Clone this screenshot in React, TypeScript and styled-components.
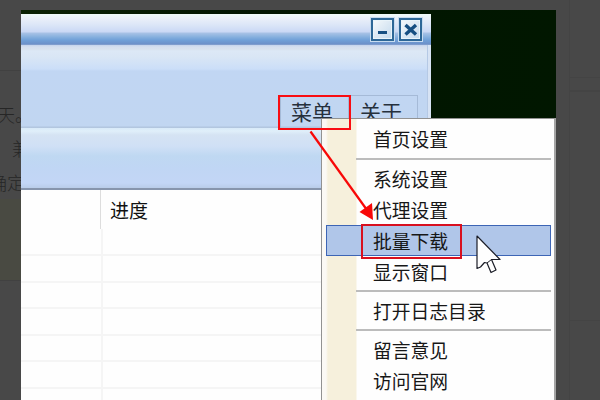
import React from 'react';
import styled, { createGlobalStyle } from 'styled-components';

const GlobalStyle = createGlobalStyle`
  * { box-sizing: border-box; }
  body { margin: 0; overflow: hidden; font-family: "Noto Sans CJK SC", sans-serif; }
`;

const Page = styled.div`
  position: relative;
  display: grid;
  grid-template-columns: 21px 535px 44px;
  width: 600px;
  height: 400px;
  overflow: hidden;
  background: #484848;
`;

const Backdrop = styled.div`
  display: flex;
  flex-direction: column;
  overflow: hidden;
`;

const Band = styled.div<{ $h: number; $tint?: string }>`
  flex: none;
  height: ${p => p.$h}px;
  background: ${p => p.$tint ?? 'transparent'};
  border-bottom: 1px solid #414141;
`;

const DimText = styled.div`
  flex: none;
  padding-top: 26px;
`;

const DimLine = styled.div<{ $shift: number }>`
  height: 34px;
  line-height: 34px;
  margin-left: ${p => p.$shift}px;
  white-space: nowrap;
  font-size: 18px;
  font-weight: 300;
  color: #262626;
`;

const DimCard = styled.div<{ $h: number; $top?: boolean }>`
  flex: none;
  height: ${p => p.$h}px;
  margin-left: 13px;
  border: solid #444444;
  border-width: ${p => (p.$top ? '1px 0 0 1px' : '0 0 1px 1px')};
`;

const Shot = styled.div`
  height: 390px;
  margin-top: 10px;
  padding-top: 4px;
  background: linear-gradient(90deg, #0b2203 0, #061b02 130px, #011500 230px, #011700 100%);
  overflow: hidden;
`;

const Window = styled.div`
  display: flex;
  flex-direction: column;
  width: 410px;
  height: 386px;
  background: #fefefe;
  overflow: hidden;
`;

const TitleBar = styled.div`
  display: flex;
  flex: none;
  justify-content: flex-end;
  gap: 5px;
  height: 31px;
  padding: 4px 9px 0 0;
  background: linear-gradient(#effaf8 0, #e9eff9 5px, #d9e4f7 12px, #cad8f5 18px, #a8c2e6 19px, #86b0de 23px, #70a0d8 26px, #6c90c9 30px, #91a8d2 31px);
`;

const TitleButton = styled.div`
  display: grid;
  place-items: center;
  width: 23px;
  height: 23px;
  border: 2px solid #2d6797;
  background: linear-gradient(135deg, #f5f9fb, #c3d9ed);
  box-shadow: inset 0 0 0 1px #e9f4fa, 0 0 0 1px #c8dcf0;
`;

const Toolbar = styled.div`
  display: flex;
  flex: none;
  align-items: flex-end;
  justify-content: flex-end;
  height: 83px;
  padding-right: 13px;
  background: linear-gradient(#c4d3ec 0, #d5dfef 2px, #d8e1ee 4px, #dce8f6 6px, #d9e6f5 12px, #cbdef8 24px, #c1d6f3 26px, #c1d6f1 81px, #b1c5df 82px, #b4c8e0 83px);
  box-shadow: inset -4px 0 0 -1px #d7e3f4, inset -5px 0 0 -1px #b5c9e5;
`;

const TabButton = styled.div`
  width: 69px;
  height: 33px;
  padding-left: 10px;
  border: 1px solid #a5bad7;
  border-bottom: 0;
  font-size: 21px;
  line-height: 30px;
  color: #26303c;
  white-space: nowrap;
`;

const SubBar = styled.div`
  flex: none;
  height: 62px;
  border-bottom: 2px solid #8795ad;
  background: linear-gradient(#d8eaf9 0, #e0effa 3px, #d5e3f3 7px, #d0e0f6 18px, #bfd8f2 28px, #c0d6f4 40px, #c3d6f6 55px, #b9cce9 60px);
`;

const TableHead = styled.div`
  display: grid;
  grid-template-columns: 79px 1fr;
  flex: none;
  height: 39px;
`;

const HeadCell = styled.div`
  padding-left: 9px;
  font-size: 19px;
  line-height: 39px;
  color: #111;
  & + & { border-left: 1px solid #dddddd; }
`;

const TableRow = styled.div<{ $h: number }>`
  display: grid;
  grid-template-columns: 80px 1fr;
  flex: none;
  height: ${p => p.$h}px;
  border-bottom: 2px solid #f5f5f5;
`;

const Cell = styled.div`
  & + & { border-left: 2px solid #f5f5f5; }
`;

const Menu = styled.div`
  position: absolute;
  left: 321px;
  top: 118px;
  width: 235px;
  height: 284px;
  padding: 4px 3px 0 4px;
  border: 1px solid #929292;
  border-right: 2px solid #a4a4a4;
  background: linear-gradient(90deg, #fbf9f5 0, #fbf9f5 4px, #f6f0dc 6px, #f6f0dc 34px, #fefefe 35px);
`;

const MenuItem = styled.div<{ $active?: boolean }>`
  height: 31px;
  padding-left: 46px;
  border: 1px solid ${p => (p.$active ? '#3d65b5' : 'transparent')};
  background: ${p => (p.$active ? '#b0c6e9' : 'transparent')};
  font-size: 18.8px;
  line-height: 29px;
  color: #171717;
  white-space: nowrap;
`;

const Separator = styled.div<{ $before?: number }>`
  height: 2px;
  margin: ${p => p.$before ?? 3}px 0 3px 30px;
  background: #bcbcbc;
`;

const RedBox = styled.div<{ $x: number; $y: number; $w: number; $h: number; $color: string }>`
  position: absolute;
  left: ${p => p.$x}px;
  top: ${p => p.$y}px;
  width: ${p => p.$w}px;
  height: ${p => p.$h}px;
  border: 2px solid ${p => p.$color};
`;

const Arrow = styled.svg`
  position: absolute;
  left: 300px;
  top: 125px;
`;

const Pointer = styled.svg`
  position: absolute;
  left: 474px;
  top: 233px;
`;

const rowHeights = [27, 27, 26, 27, 26, 27, 26];

export default function App() {
  return (
    <>
      <GlobalStyle />
      <Page>
        <Backdrop>
          <Band $h={71} />
          <DimText>
            <DimLine $shift={-3}>天。</DimLine>
            <DimLine $shift={12}>兼</DimLine>
            <DimLine $shift={-11}>确定</DimLine>
          </DimText>
          <Band $h={82} $tint="#494a42" />
        </Backdrop>
        <Shot>
          <Window>
            <TitleBar>
              <TitleButton>
                <svg width="17" height="17" viewBox="0 0 17 17">
                  <rect x="4" y="10" width="9" height="3" fill="#164f82" />
                </svg>
              </TitleButton>
              <TitleButton>
                <svg width="17" height="17" viewBox="0 0 17 17">
                  <path d="M3.500 4L14 13.500M14 4L3.500 13.500" stroke="#164f82" strokeWidth="3.4" />
                </svg>
              </TitleButton>
            </TitleBar>
            <Toolbar>
              <TabButton>菜单</TabButton>
              <TabButton>关于</TabButton>
            </Toolbar>
            <SubBar />
            <TableHead>
              <HeadCell />
              <HeadCell>进度</HeadCell>
            </TableHead>
            {rowHeights.map((h, i) => (
              <TableRow key={i} $h={h}>
                <Cell />
                <Cell />
              </TableRow>
            ))}
          </Window>
        </Shot>
        <Backdrop>
          <DimCard $h={78} />
          <DimCard $h={13} />
          <DimCard $h={229} $top />
          <DimCard $h={80} $top />
        </Backdrop>
        <Menu>
          <MenuItem>首页设置</MenuItem>
          <Separator $before={4} />
          <MenuItem>系统设置</MenuItem>
          <MenuItem>代理设置</MenuItem>
          <MenuItem $active>批量下载</MenuItem>
          <MenuItem>显示窗口</MenuItem>
          <Separator />
          <MenuItem>打开日志目录</MenuItem>
          <Separator />
          <MenuItem>留言意见</MenuItem>
          <MenuItem>访问官网</MenuItem>
        </Menu>
        <RedBox $x={278} $y={95} $w={73} $h={35} $color="#f90d12" />
        <RedBox $x={361} $y={224} $w={101} $h={35} $color="#d8101f" />
        <Arrow width="80" height="100" viewBox="0 0 80 100">
          <path d="M10.500 6.500L67 85" stroke="#f80808" strokeWidth="2.2" />
          <path d="M73 95L59.500 87L72 78Z" fill="#f80808" />
        </Arrow>
        <Pointer width="28" height="44" viewBox="0 0 28 44">
          <path
            d="M3 3L26 26.500H17.500L22 37L17 39.500L13 30L10.500 29.500L6.500 34L3 35.500Z"
            fill="#fefefe"
            stroke="#1b1d27"
            strokeWidth="1.2"
            strokeLinejoin="round"
          />
          <path d="M13 30L17.500 26.500" stroke="#1b1d27" strokeWidth="1" />
        </Pointer>
      </Page>
    </>
  );
}
